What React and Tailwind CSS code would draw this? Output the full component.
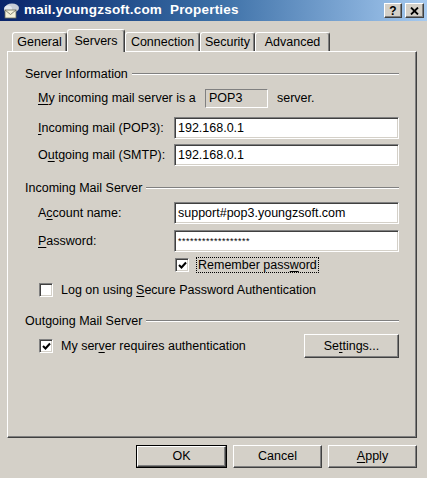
import React from 'react'

const sunken =
  'border border-t-[#808080] border-l-[#808080] border-r-white border-b-white shadow-[inset_1px_1px_0_#404040,inset_-1px_-1px_0_#d4d0c8]'
const raised =
  'border border-t-white border-l-white border-r-[#404040] border-b-[#404040] shadow-[inset_-1px_-1px_0_#808080]'

function U({ children }) {
  return <span className="underline underline-offset-2">{children}</span>
}

function Group({ title }) {
  return (
    <div className="flex items-center h-[16px]">
      <span className="pr-[4px]">{title}</span>
      <div className="flex-1 h-[2px] border-t border-t-[#808080] border-b border-b-white" />
    </div>
  )
}

function Field({ label, value, mt }) {
  return (
    <div className={`flex items-center pl-[13px] ${mt}`}>
      <div className="w-[136px]">{label}</div>
      <div className={`flex-1 h-[22px] bg-white flex items-center px-[3px] ${sunken}`}>{value}</div>
    </div>
  )
}

function Check({ checked }) {
  return (
    <div className={`w-[14px] h-[14px] bg-white flex items-center justify-center ${sunken}`}>
      {checked && (
        <svg width="9" height="9" viewBox="0 0 9 9">
          <path d="M1 4 L3.5 6.5 L8 1.5" stroke="#000" strokeWidth="2" fill="none" />
        </svg>
      )}
    </div>
  )
}

function Tab({ label, active, w }) {
  if (active) {
    return (
      <div
        className={`relative z-10 -mb-[1px] h-[23px] bg-[#d4d0c8] border-t border-l border-white border-r border-r-[#404040] rounded-t-[3px] shadow-[inset_-1px_0_0_#808080] flex items-start justify-center pt-[2px] ${w}`}
      >
        {label}
      </div>
    )
  }
  return (
    <div
      className={`h-[19px] border-t border-l border-white border-r border-r-[#404040] rounded-t-[3px] shadow-[inset_-1px_0_0_#808080] flex items-center justify-center ${w}`}
    >
      {label}
    </div>
  )
}

function Btn({ children, def, w = 'w-[89px]' }) {
  return (
    <div className={`${def ? 'border border-black' : ''}`}>
      <div className={`${w} ${def ? 'h-[21px]' : 'h-[23px]'} ${raised} flex items-center justify-center`}>
        {children}
      </div>
    </div>
  )
}

export default function App() {
  return (
    <div
      className="w-[427px] h-[478px] bg-[#d4d0c8] text-black text-[12.5px] overflow-hidden"
      style={{ fontFamily: '"Liberation Sans", Arial, sans-serif' }}
    >
      <div className="h-[21px] flex items-center bg-gradient-to-r from-[#0a246a] via-[#3a6ea5] to-[#a6caf0] pl-[3px] pr-[3px]">
        <svg width="18" height="17" viewBox="0 0 18 17">
          <ellipse cx="9" cy="6" rx="7" ry="4.5" fill="#c8cdd6" />
          <ellipse cx="5" cy="7" rx="4" ry="3.5" fill="#e4e8ee" />
          <rect x="2" y="8" width="11" height="8" fill="#f4f0d8" stroke="#6b6b5a" strokeWidth="0.8" />
          <path d="M2 8 L7.5 12.5 L13 8" stroke="#6b6b5a" strokeWidth="0.8" fill="none" />
        </svg>
        <span className="ml-[3px] text-white font-bold text-[13.5px] tracking-[0.2px] whitespace-pre">
          mail.youngzsoft.com  Properties
        </span>
        <div className="flex-1" />
        <div className={`w-[18px] h-[15px] bg-[#d4d0c8] ${raised} flex items-center justify-center font-bold text-[12px] leading-none`}>
          ?
        </div>
        <div className={`ml-[3px] w-[19px] h-[15px] bg-[#d4d0c8] ${raised} flex items-center justify-center`}>
          <svg width="9" height="8" viewBox="0 0 9 8">
            <path d="M1 0.5 L8 7.5 M8 0.5 L1 7.5" stroke="#000" strokeWidth="1.8" />
          </svg>
        </div>
      </div>

      <div className="px-[7px] pt-[8px]">
        <div className="flex items-end h-[22px] pl-[5px]">
          <Tab label="General" w="w-[55px]" />
          <Tab label="Servers" w="w-[58px]" active />
          <Tab label="Connection" w="w-[75px]" />
          <Tab label="Security" w="w-[55px]" />
          <Tab label="Advanced" w="w-[75px]" />
        </div>

        <div className="w-[410px] h-[387px] border-t border-l border-white border-r border-b border-r-[#404040] border-b-[#404040] shadow-[inset_-1px_-1px_0_#808080] pl-[17px] pr-[17px] pt-[14px]">
          <Group title="Server Information" />
          <div className="flex items-center pl-[13px] mt-[7px]">
            <div className="w-[167px]">
              <U>M</U>y incoming mail server is a
            </div>
            <div className="w-[63px] h-[19px] border border-t-[#808080] border-l-[#808080] border-r-white border-b-white flex items-center px-[3px]">
              POP3
            </div>
            <div className="ml-[9px]">server.</div>
          </div>
          <Field
            mt="mt-[9px]"
            label={<><U>I</U>ncoming mail (POP3):</>}
            value="192.168.0.1"
          />
          <Field
            mt="mt-[5px]"
            label={<>O<U>u</U>tgoing mail (SMTP):</>}
            value="192.168.0.1"
          />

          <div className="mt-[14px]">
            <Group title="Incoming Mail Server" />
          </div>
          <Field
            mt="mt-[6px]"
            label={<>A<U>c</U>count name:</>}
            value="support#pop3.youngzsoft.com"
          />
          <Field
            mt="mt-[6px]"
            label={<><U>P</U>assword:</>}
            value={<span className="text-[9px] tracking-[0.5px] leading-none">******************</span>}
          />
          <div className="flex items-center pl-[150px] mt-[5px] h-[16px]">
            <Check checked />
            <span className="ml-[7px] border border-dotted border-black px-[1px] leading-[14px]">
              Remember pass<U>w</U>ord
            </span>
          </div>
          <div className="flex items-center pl-[14px] mt-[9px] h-[16px]">
            <Check />
            <span className="ml-[8px]">
              Log on using <U>S</U>ecure Password Authentication
            </span>
          </div>

          <div className="mt-[15px]">
            <Group title="Outgoing Mail Server" />
          </div>
          <div className="flex items-center pl-[14px] mt-[5px]">
            <Check checked />
            <span className="ml-[8px]">
              My ser<U>v</U>er requires authentication
            </span>
            <div className="flex-1" />
            <div className={`w-[95px] h-[24px] ${raised} flex items-center justify-center`}>
              Se<U>t</U>tings...
            </div>
          </div>
        </div>

        <div className="flex justify-end gap-[6px] mt-[7px] pr-[3px]">
          <Btn def>OK</Btn>
          <Btn>Cancel</Btn>
          <Btn>
            <U>A</U>pply
          </Btn>
        </div>
      </div>
    </div>
  )
}
